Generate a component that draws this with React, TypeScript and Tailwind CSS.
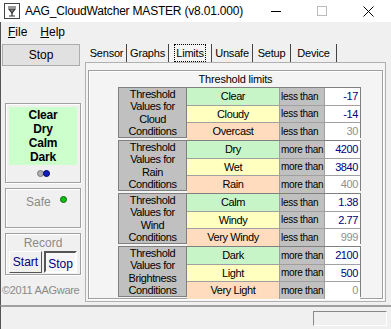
import React from 'react';

const groups = [
  {
    label: ['Threshold', 'Values for', 'Cloud', 'Conditions'],
    rows: [
      { name: 'Clear', cmp: 'less than', value: '-17', active: true },
      { name: 'Cloudy', cmp: 'less than', value: '-14', active: true },
      { name: 'Overcast', cmp: 'less than', value: '30', active: false },
    ],
  },
  {
    label: ['Threshold', 'Values for', 'Rain', 'Conditions'],
    rows: [
      { name: 'Dry', cmp: 'more than', value: '4200', active: true },
      { name: 'Wet', cmp: 'more than', value: '3840', active: true },
      { name: 'Rain', cmp: 'more than', value: '400', active: false },
    ],
  },
  {
    label: ['Threshold', 'Values for', 'Wind', 'Conditions'],
    rows: [
      { name: 'Calm', cmp: 'less than', value: '1.38', active: true },
      { name: 'Windy', cmp: 'less than', value: '2.77', active: true },
      { name: 'Very Windy', cmp: 'less than', value: '999', active: false },
    ],
  },
  {
    label: ['Threshold', 'Values for', 'Brightness', 'Conditions'],
    rows: [
      { name: 'Dark', cmp: 'more than', value: '2100', active: true },
      { name: 'Light', cmp: 'more than', value: '500', active: true },
      { name: 'Very Light', cmp: 'more than', value: '0', active: false },
    ],
  },
];

const rowColors = ['bg-[#c8f5c8]', 'bg-[#ffffc0]', 'bg-[#ffdcbe]'];

const tabs = [
  { name: 'Sensor', w: 'w-[40px]' },
  { name: 'Graphs', w: 'w-[42px]' },
  { name: 'Limits', w: 'w-[43px]' },
  { name: 'Unsafe', w: 'w-[41px]' },
  { name: 'Setup', w: 'w-[38px]' },
  { name: 'Device', w: 'w-[46px]' },
];

function AppIcon() {
  return (
    <svg width="16" height="16" viewBox="0 0 16 16">
      <rect x="0.5" y="0.5" width="15" height="15" fill="#fff" stroke="#444" />
      <path d="M4 4h8M5 6h6l-3 4z" stroke="#333" strokeWidth="1.2" fill="#888" />
      <path d="M8 10v3M5 13h6" stroke="#333" strokeWidth="1.2" />
    </svg>
  );
}

function GroupFrame({ className, children }: { className?: string; children?: React.ReactNode }) {
  return (
    <div className={`border border-[#a0a0a0] shadow-[inset_1px_1px_0_#fff,1px_1px_0_#fff] ${className ?? ''}`}>
      {children}
    </div>
  );
}

export default function App() {
  return (
    <div className="w-[391px] h-[329px] bg-[#f0f0f0] flex flex-col overflow-hidden text-black" style={{ fontFamily: '"Liberation Sans", Arial, sans-serif' }}>
      {/* title bar */}
      <div className="h-[22px] bg-white flex items-center pl-[4px] shrink-0">
        <AppIcon />
        <span className="ml-[5px] text-[12px] tracking-[-0.2px]">AAG_CloudWatcher MASTER (v8.01.000)</span>
        <div className="ml-auto flex items-center h-full">
          <div className="w-[46px] flex justify-center"><div className="w-[10px] h-px bg-black" /></div>
          <div className="w-[46px] flex justify-center"><div className="w-[10px] h-[10px] border border-[#bbb]" /></div>
          <div className="w-[46px] flex justify-center">
            <svg width="11" height="11" viewBox="0 0 11 11"><path d="M0.5 0.5l10 10M10.5 0.5l-10 10" stroke="#000" /></svg>
          </div>
        </div>
      </div>

      {/* menu */}
      <div className="h-[19px] flex items-center gap-[13px] pl-[7px] text-[12px] shrink-0 border-l border-[#555]">
        <span><span className="underline">F</span>ile</span>
        <span><span className="underline">H</span>elp</span>
      </div>

      {/* body */}
      <div className="flex flex-1 min-h-0 border-l border-[#555]">
        {/* left column */}
        <div className="w-[84px] flex flex-col pt-[3px] pl-[1px] shrink-0">
          <button className="w-[78px] h-[22px] border border-[#adadad] bg-[#e1e1e1] text-[12px]">Stop</button>

          <GroupFrame className="mt-[37px] ml-[3px] w-[76px] h-[80px] p-[3px] flex flex-col">
            <div className="bg-[#ccffcc] h-[58px] flex flex-col items-center justify-center font-bold text-[12px] leading-[14px] tracking-[-0.2px]">
              <span>Clear</span>
              <span>Dry</span>
              <span>Calm</span>
              <span>Dark</span>
            </div>
            <div className="flex justify-center mt-[5px]">
              <div className="w-[7px] h-[7px] rounded-full bg-[#b0b0b0] border border-[#777]" />
              <div className="w-[7px] h-[7px] rounded-full bg-[#1020c0] border border-[#000060] -ml-px" />
            </div>
          </GroupFrame>

          <GroupFrame className="mt-[5px] ml-[3px] w-[76px] h-[40px] flex items-start pt-[4px]">
            <span className="ml-[20px] text-[12px] text-[#8a8a8a]">Safe</span>
            <div className="ml-auto mr-[13px] mt-[3px] w-[7px] h-[7px] rounded-full bg-[#10c010] border border-[#0a6a0a]" />
          </GroupFrame>

          <GroupFrame className="mt-[5px] ml-[3px] w-[76px] h-[42px] flex flex-col items-center pt-[2px]">
            <span className="text-[12px] text-[#8a8a8a] leading-[14px]">Record</span>
            <div className="flex gap-[2px] mt-[1px]">
              <button className="w-[33px] h-[22px] text-[12px] text-[#000080] bg-[#f0f0f0] border border-t-white border-l-white border-r-[#555] border-b-[#555]">Start</button>
              <button className="w-[33px] h-[22px] text-[12px] text-[#000080] bg-[#f7f7f7] border-2 border-t-[#555] border-l-[#555] border-r-white border-b-white pt-[2px]">Stop</button>
            </div>
          </GroupFrame>

          <span className="mt-[7px] text-[11px] text-[#8a8a8a] tracking-[-0.3px] whitespace-nowrap">©2011 AAGware</span>
        </div>

        {/* tabs */}
        <div className="flex-1 flex flex-col pt-[3px] pr-[5px]">
          <div className="flex h-[18px] pl-[2px] text-[11px] tracking-[-0.2px]">
            {tabs.map((t) => (
              <div key={t.name} className={`${t.w} border-r border-[#444] flex items-center justify-center h-full whitespace-nowrap ${t.name === 'Limits' ? 'bg-[#f4f4f4]' : ''}`}>
                <span className={t.name === 'Limits' ? 'outline outline-1 outline-dotted outline-black px-[1px]' : ''}>{t.name}</span>
              </div>
            ))}
          </div>
          <div className="h-[240px] border border-[#b0b0b0] bg-[#f4f4f4] p-[2px] pt-[7px]">
            <GroupFrame className="h-[229px] flex flex-col items-center">
              <div className="text-[11px] h-[16px] leading-[16px] tracking-[-0.2px]">Threshold limits</div>
              <div className="flex flex-col gap-[2px] ml-[8px]">
                {groups.map((g, gi) => (
                  <div key={gi} className="flex border border-[#808080] h-[51px] text-[11px] tracking-[-0.4px] whitespace-nowrap">
                    <div className="w-[68px] bg-[#c0c0c0] flex flex-col items-center justify-center leading-[12.2px] border-r border-[#808080]">
                      {g.label.map((l) => <span key={l}>{l}</span>)}
                    </div>
                    <div className="flex flex-col h-full">
                      {g.rows.map((r, ri) => (
                        <div key={r.name} className={`flex flex-1 ${ri > 0 ? 'border-t border-[#a0a0a0]' : ''}`}>
                          <div className={`w-[93px] ${rowColors[ri]} flex items-center justify-center border-r border-[#a0a0a0]`}>{r.name}</div>
                          <div className="w-[45px] bg-[#c0c0c0] flex items-center pl-[1px] border-r border-[#a0a0a0] overflow-hidden text-[10px] tracking-[-0.3px]">{r.cmp}</div>
                          <div className={`w-[35px] bg-white flex items-center justify-end pr-[2px] ${r.active ? 'text-[#000080]' : 'text-[#909090]'}`}>{r.value}</div>
                        </div>
                      ))}
                    </div>
                  </div>
                ))}
              </div>
            </GroupFrame>
          </div>
        </div>
      </div>

      {/* status bar */}
      <div className="h-[24px] shrink-0 border-t-2 border-[#a0a0a0] border-l border-l-[#555] flex items-center justify-end pr-[4px]">
        <div className="w-[74px] h-[15px] border border-t-[#888] border-l-[#888] border-r-white border-b-white" />
      </div>
    </div>
  );
}
